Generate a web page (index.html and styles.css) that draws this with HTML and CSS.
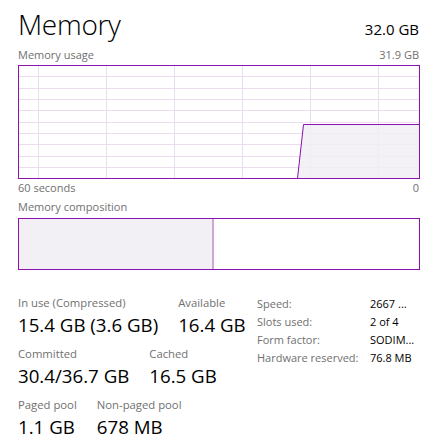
FILE: index.html
```html
<!DOCTYPE html>
<html>
<head>
<meta charset="utf-8">
<link rel="stylesheet" href="styles.css">
</head>
<body>
<div class="page">
  <div class="header">
    <div class="title">Memory</div>
    <div class="total">32.0 GB</div>
  </div>
  <div class="caption-row">
    <span>Memory usage</span>
    <span>31.9 GB</span>
  </div>
  <svg class="graph" width="402" height="114" viewBox="0 0 402 114">
    <g stroke="#ecdcf0" stroke-width="1">
      <line x1="0" y1="11.5" x2="402" y2="11.5"/>
      <line x1="0" y1="23.5" x2="402" y2="23.5"/>
      <line x1="0" y1="34.5" x2="402" y2="34.5"/>
      <line x1="0" y1="45.5" x2="402" y2="45.5"/>
      <line x1="0" y1="57.5" x2="402" y2="57.5"/>
      <line x1="0" y1="68.5" x2="402" y2="68.5"/>
      <line x1="0" y1="79.5" x2="402" y2="79.5"/>
      <line x1="0" y1="91.5" x2="402" y2="91.5"/>
      <line x1="0" y1="102.5" x2="402" y2="102.5"/>
      <line x1="20.5" y1="0" x2="20.5" y2="114"/>
      <line x1="88.5" y1="0" x2="88.5" y2="114"/>
      <line x1="156.5" y1="0" x2="156.5" y2="114"/>
      <line x1="224.5" y1="0" x2="224.5" y2="114"/>
      <line x1="292.5" y1="0" x2="292.5" y2="114"/>
      <line x1="360.5" y1="0" x2="360.5" y2="114"/>
    </g>
    <polygon points="279.5,113.5 285.5,59.5 401.5,59.5 401.5,113.5" fill="#f1eef3" fill-opacity="0.85"/>
    <polyline points="279.5,113.5 285.5,59.5 401.5,59.5" fill="none" stroke="#8b12ae" stroke-width="1"/>
    <rect x="0.5" y="0.5" width="401" height="113" fill="none" stroke="#8b12ae" stroke-width="1"/>
  </svg>
  <div class="axis-row">
    <span>60 seconds</span>
    <span>0</span>
  </div>
  <div class="caption-row comp-caption">
    <span>Memory composition</span>
  </div>
  <div class="composition">
    <div class="comp-used"></div>
    <div class="comp-free"></div>
  </div>
  <div class="stats">
    <div class="stats-left">
      <div class="stat-row">
        <div class="stat">
          <div class="stat-label">In use (Compressed)</div>
          <div class="stat-value">15.4 GB (3.6 GB)</div>
        </div>
        <div class="stat">
          <div class="stat-label">Available</div>
          <div class="stat-value">16.4 GB</div>
        </div>
      </div>
      <div class="stat-row">
        <div class="stat">
          <div class="stat-label">Committed</div>
          <div class="stat-value">30.4/36.7 GB</div>
        </div>
        <div class="stat">
          <div class="stat-label">Cached</div>
          <div class="stat-value">16.5 GB</div>
        </div>
      </div>
      <div class="stat-row">
        <div class="stat">
          <div class="stat-label">Paged pool</div>
          <div class="stat-value">1.1 GB</div>
        </div>
        <div class="stat">
          <div class="stat-label">Non-paged pool</div>
          <div class="stat-value">678 MB</div>
        </div>
      </div>
    </div>
    <div class="stats-right">
      <div class="kv"><span class="k">Speed:</span><span class="v">2667 ...</span></div>
      <div class="kv"><span class="k">Slots used:</span><span class="v">2 of 4</span></div>
      <div class="kv"><span class="k">Form factor:</span><span class="v">SODIM...</span></div>
      <div class="kv"><span class="k">Hardware reserved:</span><span class="v">76.8 MB</span></div>
    </div>
  </div>
</div>
</body>
</html>
```
FILE: styles.css
```css
* { box-sizing: border-box; }
html, body { margin: 0; padding: 0; background: #ffffff; }
body {
  font-family: "Open Sans", "Noto Sans", "Liberation Sans", sans-serif;
  color: #000000;
}
.page {
  width: 402px;
  margin-left: 18px;
  padding-top: 4px;
}
.header {
  display: flex;
  justify-content: space-between;
  align-items: baseline;
  height: 42px;
}
.title {
  font-size: 28px;
  font-weight: 300;
  line-height: 40px;
  letter-spacing: -0.3px;
}
.total {
  font-size: 15px;
  line-height: 20px;
  padding-right: 1px;
}
.caption-row {
  display: flex;
  justify-content: space-between;
  font-size: 11px;
  line-height: 18px;
  color: #707070;
  height: 19px;
  padding-right: 1px;
}
.graph { display: block; }
.axis-row {
  display: flex;
  justify-content: space-between;
  font-size: 11px;
  line-height: 18px;
  color: #707070;
  height: 18px;
  padding-right: 1px;
}
.comp-caption { height: 20px; margin-top: 1px; }
.composition {
  display: flex;
  height: 52px;
  border: 1px solid #8b12ae;
}
.comp-used {
  width: 195px;
  background: #f2f0f4;
  border-right: 2px solid #cba8d6;
}
.comp-free { flex: 1; }
.stats {
  display: flex;
  justify-content: space-between;
  margin-top: 25px;
}
.stats-left {
  display: flex;
  flex-direction: column;
  gap: 7px;
}
.stat-row {
  display: flex;
  gap: 20px;
}
.stat-label {
  font-size: 11.3px;
  line-height: 16px;
  color: #707070;
}
.stat-value {
  font-size: 18.7px;
  line-height: 28px;
}
.stats-right {
  width: 163px;
  flex-shrink: 0;
  display: flex;
  flex-direction: column;
}
.kv {
  display: flex;
  font-size: 11px;
  line-height: 18px;
}
.k { width: 113px; color: #707070; }
.v { color: #000000; }
```
